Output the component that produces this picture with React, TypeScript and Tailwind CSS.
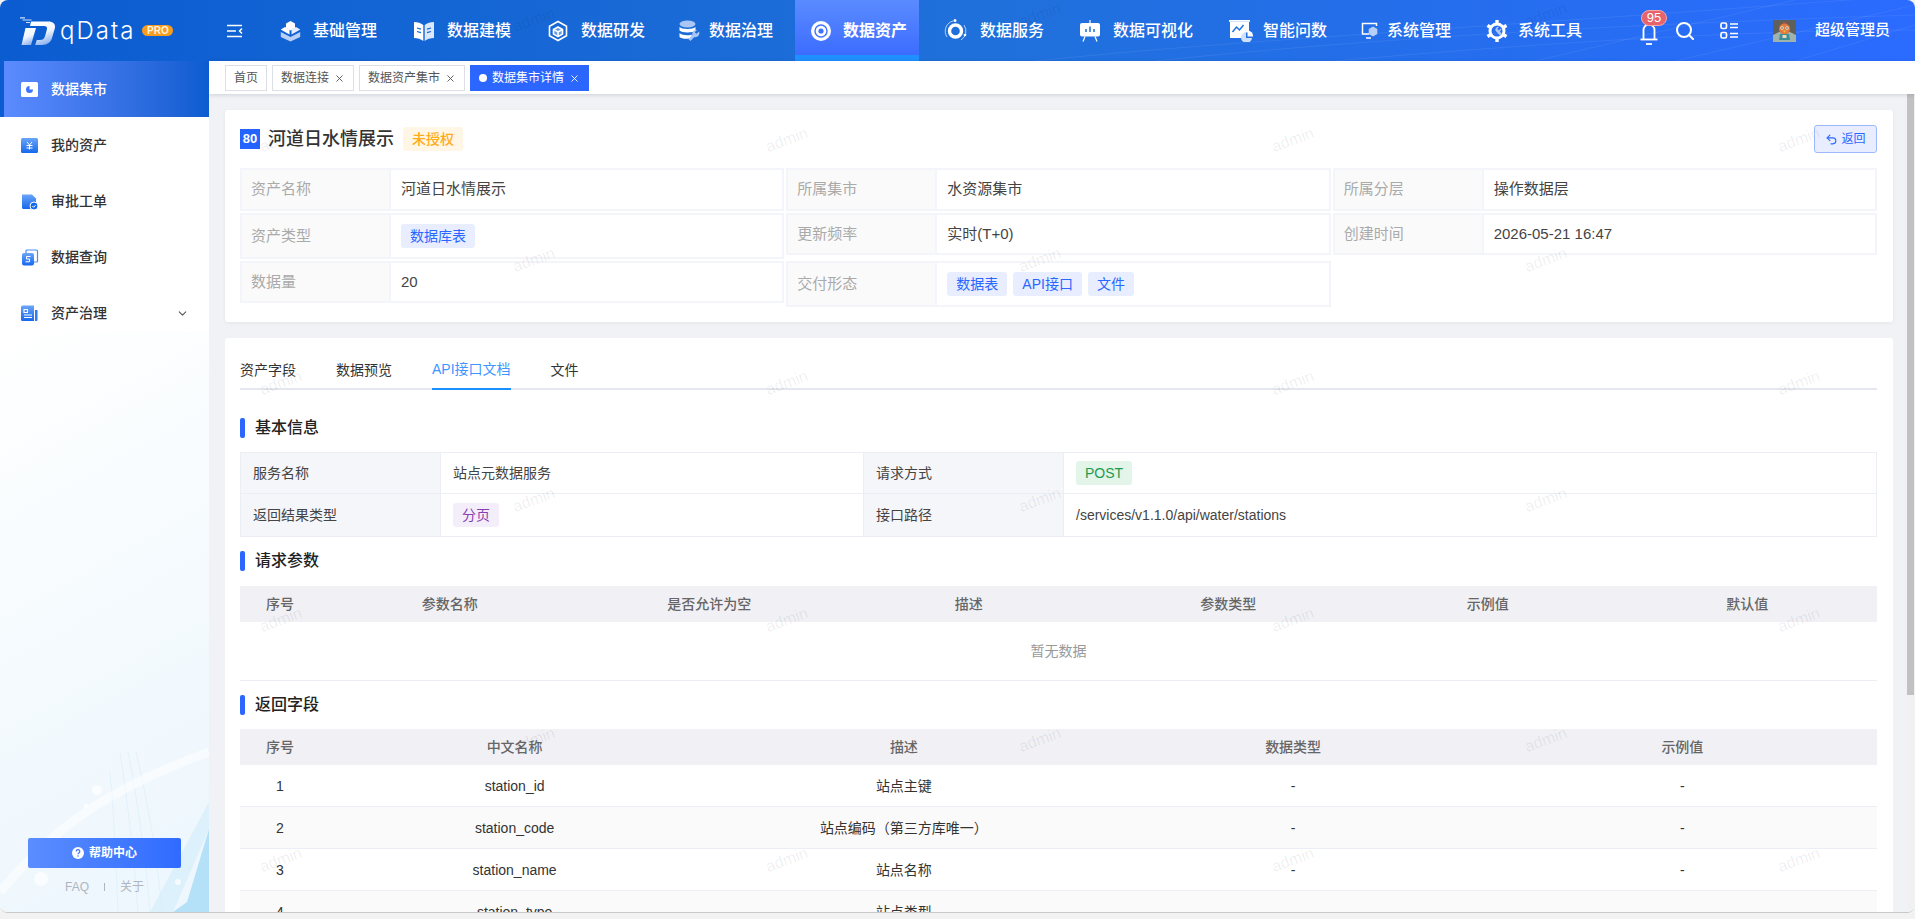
import { ChevronDown, Undo2, X } from "lucide-react";
import type { ReactNode } from "react";

const fontStack = "font-['Liberation_Sans','Noto_Sans_CJK_SC',sans-serif]";

function BasicIcon() {
  return (
    <svg width="21" height="22" viewBox="0 0 21 22">
      <path d="M10.5 1l4.5 2.5v4.5l-4.5 2.5L6 8V3.5z" fill="#fff" />
      <path d="M5 7l4.5 2.6v4.8L5 12 .8 9.6z" fill="#fff" />
      <path d="M16 7l4.2 2.6L16 12l-4.5 2.4V9.6z" fill="#e6efff" />
      <path d="M.8 12l9.7 5 9.7-5v5L10.5 21.5.8 17z" fill="#b9cff5" />
    </svg>
  );
}

function BookIcon() {
  return (
    <svg width="20" height="22" viewBox="0 0 20 22">
      <path d="M0 2c3.500 0 7 1 9.300 3v16C7 19 3.500 18 0 18z" fill="#fff" />
      <path d="M20 2c-3.500 0-7 1-9.300 3v16c2.300-2 5.800-3 9.300-3z" fill="#dbe7fb" />
      <path d="M3 8l4 1.200M3 11.500l4 1.200M17 8l-4 1.200M17 11.500l-4 1.200" stroke="#1565d6" strokeWidth="1.300" />
    </svg>
  );
}

function CubeIcon() {
  return (
    <svg width="20" height="22" viewBox="0 0 20 22" fill="none" stroke="#fff" strokeWidth="1.600">
      <path d="M10 1.500l8.500 4.700v9.600L10 20.500l-8.500-4.700V6.200z" />
      <path d="M10 7l4.500 2.500v4.600L10 16.600l-4.500-2.500V9.500z" fill="#fff" fillOpacity="0.35" />
      <path d="M5.500 9.500l4.500 2.400 4.500-2.400M10 12v4.600" />
    </svg>
  );
}

function DatabaseIcon() {
  return (
    <svg width="21" height="22" viewBox="0 0 21 22">
      <ellipse cx="8.500" cy="4" rx="8" ry="3.500" fill="#a9c6f5" />
      <path d="M.5 7c2 2.600 14 2.600 16 0v3.500c-2 2.600-14 2.600-16 0z" fill="#fff" />
      <path d="M.5 13c2 2.600 11 2.600 12 1.500l1 3C10 19.500 2.500 19 .5 17z" fill="#fff" />
      <path d="M20 11.500l-2.500 2.300-1.800-1.500 2.300-2.300a4 4 0 0 0-4.600 5l-4 4 2 2 4-4a4 4 0 0 0 4.600-5.500z" fill="#a9c6f5" />
    </svg>
  );
}

function AssetIcon() {
  return (
    <svg width="20" height="20" viewBox="0 0 20 20">
      <circle cx="10" cy="10" r="10" fill="#fff" />
      <circle cx="10" cy="10" r="6" fill="none" stroke="#3f72ff" strokeWidth="1.400" />
      <circle cx="10" cy="10" r="2.600" fill="#3f72ff" />
    </svg>
  );
}

function ServiceIcon() {
  return (
    <svg width="23" height="26" viewBox="0 0 23 26" fill="none">
      <circle cx="11.500" cy="13" r="6" stroke="#fff" strokeWidth="3.400" />
      <path d="M3 19A10.500 10.500 0 0 1 9 3M20 7a10.500 10.500 0 0 1-3 15" stroke="#fff" strokeOpacity="0.75" strokeWidth="0.900" />
      <circle cx="11" cy="2.500" r="1.500" fill="#fff" />
      <circle cx="21" cy="17" r="1.300" fill="#fff" />
    </svg>
  );
}

function ScreenIcon() {
  return (
    <svg width="20" height="22" viewBox="0 0 20 22">
      <rect x="0" y="3" width="20" height="13.500" rx="2" fill="#fff" />
      <path d="M6 12V9M10 12V6.500M14 12V9" stroke="#1e6fd9" strokeWidth="1.500" />
      <path d="M10 0v3M5 16.500L3 21.500M15 16.500l2 5" stroke="#fff" strokeWidth="1.200" />
    </svg>
  );
}

function ChartIcon() {
  return (
    <svg width="24" height="22" viewBox="0 0 24 22">
      <rect x="0" y="0" width="21" height="1.800" fill="#fff" />
      <path d="M1 2h19v10a8 8 0 0 0-7 6H1z" fill="#fff" />
      <path d="M3.500 12l4-5 3 3 4-5" stroke="#1e73dd" strokeWidth="1.500" fill="none" />
      <path d="M17 12a5.500 5.500 0 1 0 6 6h-6z" fill="#cfe0fa" />
      <path d="M18.500 10.500a5.500 5.500 0 0 1 5.500 6h-5.500z" fill="#fff" />
    </svg>
  );
}

function MonitorIcon() {
  return (
    <svg width="17" height="19" viewBox="0 0 17 19" fill="none">
      <path d="M8 13H1.500V2.500h14V5" stroke="#fff" strokeWidth="1.500" />
      <path d="M12 5.500l4.300 2.500v5l-4.300 2.500L7.700 13V8z" fill="#b7d0f7" />
      <path d="M5 17h5" stroke="#fff" strokeWidth="1.500" />
    </svg>
  );
}

function GearIcon() {
  return (
    <svg width="22" height="24" viewBox="0 0 22 24" fill="none">
      <circle cx="11" cy="12" r="7" stroke="#fff" strokeWidth="3" />
      <path d="M11 1v4M11 19v4M1.500 6.500l3.400 2M17 15.500l3.500 2M1.500 17.500l3.400-2M17 8.500l3.500-2" stroke="#fff" strokeWidth="3.400" />
      <path d="M15 9.500l-2.200 1.800-1.500-1.300 1.800-2.200a3 3 0 0 0-3.600 3.900l4.600 5 1.800-1.500-2-3a3 3 0 0 0 1.100-3.700z" fill="#a9c6f5" />
    </svg>
  );
}

function LogoMark() {
  return (
    <svg width="36" height="28" viewBox="0 0 36 28">
      <defs>
        <linearGradient id="logo-fill" x1="0.1" y1="0" x2="0.5" y2="1">
          <stop offset="0" stopColor="#ffffff" />
          <stop offset="0.55" stopColor="#f2f6ff" />
          <stop offset="1" stopColor="#8fb4ee" />
        </linearGradient>
      </defs>
      <path d="M5.500 11H16l-5 17H1.500z" fill="url(#logo-fill)" />
      <path d="M11 4.500h17c5 0 8 2.500 6.800 7l-2.600 9c-1.300 4.700-5 7.500-10 7.500h-7l1.600-5h3.200c2.500 0 4.200-1 4.900-3.500l2-7c.6-2.300-.3-3.500-2.800-3.500H10z" fill="url(#logo-fill)" />
      <path d="M0 .8h5M2.500 3h9M6 5.500h4" stroke="#cfe0ff" strokeWidth="1.200" />
    </svg>
  );
}

function CollapseIcon() {
  return (
    <svg width="16" height="14" viewBox="0 0 16 14" fill="none" stroke="#fff" strokeWidth="1.500">
      <path d="M0 1.500h15M0 7h9M0 12.500h15" />
      <path d="M15 4.500L12.500 7l2.500 2.500" />
    </svg>
  );
}

function BellIcon() {
  return (
    <svg width="18" height="20" viewBox="0 0 18 20" fill="none" stroke="#fff" strokeWidth="1.800">
      <path d="M3.500 14V5a5.500 5.500 0 0 1 11 0v9" />
      <path d="M.5 14.500h17" />
      <path d="M6 19h6" />
    </svg>
  );
}

function SearchIcon() {
  return (
    <svg width="18" height="18" viewBox="0 0 18 18" fill="none" stroke="#fff" strokeWidth="2">
      <circle cx="8" cy="8" r="7" />
      <path d="M13 13l4 4" strokeLinecap="round" />
    </svg>
  );
}

function GridIcon() {
  return (
    <svg width="18" height="17" viewBox="0 0 18 17" fill="none" stroke="#fff" strokeWidth="1.700">
      <rect x="1" y="1" width="5.500" height="5.500" rx="1.500" />
      <rect x="1" y="10.500" width="5.500" height="5.500" rx="1.500" />
      <path d="M10 2h8M10 5.500h8M10 11.500h8M10 15h8" />
    </svg>
  );
}

function Avatar() {
  return (
    <svg width="23" height="22" viewBox="0 0 23 22">
      <rect width="23" height="22" fill="#5f5f5c" />
      <path d="M0 15l6-3h11l6 3v7H0z" fill="#9fb2ad" />
      <path d="M10 1l1.500 2L13 1.500 13.500 4l-4 .5z" fill="#d8432c" />
      <ellipse cx="11.500" cy="9" rx="5.500" ry="5.500" fill="#e07a3e" />
      <circle cx="9" cy="8" r="1.700" fill="#f6ecd9" />
      <circle cx="14" cy="8" r="1.700" fill="#f6ecd9" />
      <circle cx="9" cy="8" r="0.700" fill="#222" />
      <circle cx="14" cy="8" r="0.700" fill="#222" />
      <path d="M10 10.500h3l-1.500 2.200z" fill="#f5c23f" />
      <path d="M7 14h9l1 6H6z" fill="#3f8f99" />
      <path d="M9.500 15h4v3h-4z" fill="#e9d9b8" />
    </svg>
  );
}

function SideIcon({ kind, active }: { kind: string; active?: boolean }) {
  const fill = active ? "#ffffff" : "url(#side-fill)";
  const ink = active ? "#3f72ff" : "#ffffff";
  return (
    <svg width="18" height="17" viewBox="0 0 18 17">
      <defs>
        <linearGradient id="side-fill" x1="0" y1="0" x2="0" y2="1">
          <stop offset="0" stopColor="#6aa5f8" />
          <stop offset="1" stopColor="#1668ec" />
        </linearGradient>
      </defs>
      {kind === "market" && (
        <>
          <rect x="0" y="1" width="17" height="15" rx="1.500" fill={fill} />
          <path d="M8.500 5a3.500 3.500 0 1 0 3.500 3.500H8.500z" fill={ink} />
        </>
      )}
      {kind === "mine" && (
        <>
          <rect x="0" y="1" width="17" height="15" rx="1.500" fill={fill} />
          <path d="M6 5l2.500 3L11 5M5.500 8.500h6M5.500 11h6M8.500 8v4.500" stroke={ink} strokeWidth="1" fill="none" />
        </>
      )}
      {kind === "approve" && (
        <>
          <path d="M1 1.500h10l4 4V16H2.500A1.500 1.500 0 0 1 1 14.500z" fill={fill} />
          <circle cx="13" cy="13" r="4" fill="#1668ec" stroke="#fff" />
          <path d="M11.300 13l1.300 1.300 2-2.200" stroke="#fff" fill="none" />
        </>
      )}
      {kind === "query" && (
        <>
          <rect x="5" y="1" width="11.500" height="12" rx="1" fill="none" stroke="#4b8df5" strokeWidth="1.200" />
          <rect x="1" y="4" width="12" height="12.500" rx="2" fill={fill} />
          <path d="M9.500 7.500h-4v2.500h3v2.800h-4" stroke={ink} strokeWidth="1" fill="none" />
        </>
      )}
      {kind === "govern" && (
        <>
          <path d="M0 2a1.500 1.500 0 0 1 1.500-1.500H13V16H1.500A1.500 1.500 0 0 1 0 14.500z" fill={fill} />
          <path d="M14 5h2.500v10a1 1 0 0 1-1 1H14z" fill="#2f7bf0" />
          <path d="M3 4.500h3.500v3H3zM3 10h8M3 12.500h8" stroke={ink} strokeWidth="1.100" fill="none" />
        </>
      )}
    </svg>
  );
}

function Tag({ children, className }: { children: ReactNode; className: string }) {
  return <span className={`inline-flex h-6 items-center rounded-[3px] px-[9px] text-sm ${className}`}>{children}</span>;
}

const nav = [
  { label: "基础管理", icon: <BasicIcon />, width: "w-[134px]", box: "w-[33px]" },
  { label: "数据建模", icon: <BookIcon />, width: "w-[134px]", box: "w-[33px]" },
  { label: "数据研发", icon: <CubeIcon />, width: "w-[131px]", box: "w-[33px]" },
  { label: "数据治理", icon: <DatabaseIcon />, width: "w-[134px]", box: "w-[30px]" },
];

const navRest = [
  { label: "数据服务", icon: <ServiceIcon />, width: "w-[143px]", pad: "pl-[25px]", box: "w-[36px]" },
  { label: "数据可视化", icon: <ScreenIcon />, width: "w-[149px]", pad: "pl-[18px]", box: "w-[33px]" },
  { label: "智能问数", icon: <ChartIcon />, width: "w-[132px]", pad: "pl-[18px]", box: "w-[34px]" },
  { label: "系统管理", icon: <MonitorIcon />, width: "w-[125px]", pad: "pl-[18px]", box: "w-[26px]" },
  { label: "系统工具", icon: <GearIcon />, width: "w-[132px]", pad: "pl-[18px]", box: "w-[32px]" },
];

const sideItems = [
  { label: "我的资产", kind: "mine" },
  { label: "审批工单", kind: "approve" },
  { label: "数据查询", kind: "query" },
];

const watermarks = [
  [534, 20], [1040, 15], [1546, 15],
  [281, 140], [787, 140], [1293, 140], [1799, 140],
  [534, 260], [1040, 260], [1546, 260],
  [281, 383], [787, 383], [1293, 383], [1799, 383],
  [534, 500], [1040, 500], [1546, 500],
  [281, 620], [787, 620], [1293, 620], [1799, 620],
  [534, 740], [1040, 740], [1546, 740],
  [281, 860], [787, 860], [1293, 860], [1799, 860],
];

const infoRows = [
  [
    { label: "资产名称", value: "河道日水情展示" },
    { label: "所属集市", value: "水资源集市" },
    { label: "所属分层", value: "操作数据层" },
  ],
  [
    { label: "资产类型", tags: ["数据库表"] },
    { label: "更新频率", value: "实时(T+0)" },
    { label: "创建时间", value: "2026-05-21 16:47" },
  ],
  [
    { label: "数据量", value: "20" },
    { label: "交付形态", tags: ["数据表", "API接口", "文件"] },
  ],
];

const fields = [
  ["1", "station_id", "站点主键"],
  ["2", "station_code", "站点编码（第三方库唯一）"],
  ["3", "station_name", "站点名称"],
  ["4", "station_type", "站点类型"],
];

function SectionTitle({ children }: { children: ReactNode }) {
  return (
    <div className="flex h-5 items-center gap-[10px]">
      <span className="h-5 w-[5px] rounded-[2px] bg-[#2b66ff]" />
      <span className="text-base font-medium text-[#222]">{children}</span>
    </div>
  );
}

function InfoCell({ cell, rowIndex }: { cell: { label: string; value?: string; tags?: string[] }; rowIndex: number }) {
  const height = cell.tags ? "h-[46px]" : rowIndex === 0 ? "h-[43px]" : "h-[42px]";
  return (
    <div className={`flex items-stretch border-2 border-[#f3f5fb] text-[15px] ${height}`}>
      <div className="flex w-[149px] shrink-0 items-center border-r-2 border-[#f3f5fb] bg-[#fafafa] pl-[9px] text-[#aaa]">{cell.label}</div>
      <div className="flex flex-1 items-center gap-[6px] pl-[10px] text-[#444]">
        {cell.value}
        {cell.tags?.map((tag) => (
          <Tag key={tag} className="bg-[#e8eeff] text-[#2b66ff]">
            {tag}
          </Tag>
        ))}
      </div>
    </div>
  );
}

export default function App() {
  return (
    <div className={`relative h-[919px] w-[1915px] overflow-hidden bg-[#f2f2f2] ${fontStack}`}>
      <div className="flex h-[913px] flex-col overflow-hidden rounded-lg border-b border-[#c8c8c8]">
        {/* top bar */}
        <header className="relative flex h-[61px] shrink-0 items-stretch bg-gradient-to-r from-[#0a5cd0] via-[#1f70da] to-[#2b6bff] text-white">
          <svg className="absolute right-0 top-0" width="880" height="61" viewBox="0 0 880 61" fill="none" stroke="#fff" strokeOpacity="0.07">
            <path d="M0 61C200 40 420 30 880 -5M120 61C320 40 560 25 880 15M300 61C480 45 700 30 880 30M500 61L760 0M640 61L880 5M760 61L880 25" />
          </svg>
          <div className="relative flex w-[227px] shrink-0 items-center pl-[20px]">
            <LogoMark />
            <span className="ml-[4px] font-['Inter',sans-serif] text-2xl font-light tracking-[2px]">qData</span>
            <span className="ml-[7px] flex h-[11px] w-[31px] items-center justify-center rounded-full bg-[#f79c1e] text-[10px] font-bold leading-none text-[#fff3dc]">PRO</span>
          </div>
          <div className="relative flex w-[35px] shrink-0 items-center">
            <CollapseIcon />
          </div>
          <nav className="relative flex items-stretch text-base font-medium">
            {nav.map((item) => (
              <div key={item.label} className={`flex items-center pl-[18px] ${item.width}`}>
                <span className={`flex shrink-0 items-center ${item.box}`}>{item.icon}</span>
                {item.label}
              </div>
            ))}
            <div className="flex w-[124px] items-center border-b-[6px] border-[#1e90ff] bg-gradient-to-b from-[#5b8bff] to-[#3c6cff] pl-[16px] pt-[6px] font-bold">
              <span className="flex w-[32px] shrink-0 items-center">
                <AssetIcon />
              </span>
              数据资产
            </div>
            {navRest.map((item) => (
              <div key={item.label} className={`flex items-center ${item.pad} ${item.width}`}>
                <span className={`flex shrink-0 items-center ${item.box}`}>{item.icon}</span>
                {item.label}
              </div>
            ))}
          </nav>
          <div className="relative ml-[40px] flex items-center">
            <div className="relative flex w-[36px] items-center pt-[8px]">
              <BellIcon />
              <span className="absolute left-[1px] top-[-7px] flex h-[16px] w-[26px] items-center justify-center rounded-full border border-[#f5a7ab] bg-[#e5636c] text-[13px] font-medium leading-none">95</span>
            </div>
            <SearchIcon />
            <span className="ml-[26px] flex">
              <GridIcon />
            </span>
            <span className="ml-[35px] flex">
              <Avatar />
            </span>
            <span className="ml-[19px] text-[15px] font-medium">超级管理员</span>
          </div>
        </header>

        <div className="flex min-h-0 flex-1">
          {/* side menu */}
          <aside className="relative z-20 flex w-[209px] shrink-0 flex-col overflow-hidden bg-white text-sm">
            <svg className="absolute bottom-0 left-0" width="209" height="580" viewBox="0 0 209 580">
              <defs>
                <linearGradient id="side-bg" x1="0" y1="0" x2="0.2" y2="1">
                  <stop offset="0" stopColor="#ffffff" />
                  <stop offset="0.5" stopColor="#f6fbfe" />
                  <stop offset="1" stopColor="#eef7fd" />
                </linearGradient>
              </defs>
              <rect width="209" height="580" fill="url(#side-bg)" />
              <path d="M209 470L150 580h23l36-83z" fill="#dcf1fb" />
              <path d="M209 497L187 570l-14 10h36z" fill="#b4e1f8" />
              <path d="M120 420c8 50 14 110 18 160M128 420c10 50 18 110 22 160M136 420c12 50 22 110 26 160M110 440c4 40 6 90 8 140" stroke="#d8edf9" strokeWidth="0.600" fill="none" />
              <path d="M0 560C50 500 100 460 209 420" stroke="#ffffff" strokeWidth="9" fill="none" opacity="0.5" />
              <circle cx="97" cy="458" r="5" fill="#ffffff" opacity="0.7" />
              <circle cx="86" cy="474" r="2.500" fill="#ffffff" opacity="0.7" />
              <circle cx="41" cy="547" r="7" fill="#ffffff" opacity="0.7" />
              <circle cx="178" cy="550" r="3" fill="#ffffff" opacity="0.7" />
            </svg>
            <div className="relative flex h-14 items-center border-l-4 border-[#0a5cd0] bg-gradient-to-r from-[#5b8bff] to-[#0a5cd0] pl-[17px] font-medium text-white">
              <span className="flex w-[30px] shrink-0">
                <SideIcon kind="market" active />
              </span>
              数据集市
            </div>
            {sideItems.map((item) => (
              <div key={item.label} className="relative flex h-14 items-center pl-[21px] font-medium text-[#333]">
                <span className="flex w-[30px] shrink-0">
                  <SideIcon kind={item.kind} />
                </span>
                {item.label}
              </div>
            ))}
            <div className="relative flex h-14 items-center pl-[21px] pr-[20px] font-medium text-[#333]">
              <span className="flex w-[30px] shrink-0">
                <SideIcon kind="govern" />
              </span>
              资产治理
              <ChevronDown size={13} className="ml-auto text-[#555]" />
            </div>
            <div className="relative mt-auto flex flex-col items-center pb-[19px]">
              <button className="flex h-[30px] w-[153px] items-center justify-center gap-[5px] rounded-[2px] bg-gradient-to-r from-[#5b8dff] to-[#2f6bff] text-xs font-bold text-white">
                <svg width="12" height="12" viewBox="0 0 12 12">
                  <circle cx="6" cy="6" r="6" fill="#fff" />
                  <path d="M4.200 4.500a1.800 1.800 0 1 1 2.700 1.500c-.6.400-.9.700-.9 1.300" stroke="#3f72ff" strokeWidth="1.200" fill="none" />
                  <circle cx="6" cy="9" r="0.800" fill="#3f72ff" />
                </svg>
                帮助中心
              </button>
              <div className="mt-[13px] flex h-[12px] items-center text-xs text-[#b0b5bd]">
                <span>FAQ</span>
                <span className="mx-[15px] h-[8px] w-px bg-[#b0b5bd]" />
                <span>关于</span>
              </div>
            </div>
          </aside>

          <main className="flex min-w-0 flex-1 flex-col">
            {/* open tabs */}
            <div className="z-[1] flex h-[33px] shrink-0 items-start gap-[5px] bg-white pl-[16px] pt-[4px] text-xs text-[#555] shadow-[0_1px_4px_rgba(0,21,41,0.15)]">
              <span className="flex h-[26px] w-[42px] items-center justify-center border border-[#dcdfe6]">首页</span>
              <span className="flex h-[26px] w-[82px] items-center justify-center gap-[5px] border border-[#dcdfe6]">
                数据连接 <X size={11} />
              </span>
              <span className="flex h-[26px] w-[106px] items-center justify-center gap-[5px] border border-[#dcdfe6]">
                数据资产集市 <X size={11} />
              </span>
              <span className="flex h-[26px] w-[119px] items-center justify-center gap-[5px] bg-[#2b66ff] text-white">
                <span className="h-[8px] w-[8px] rounded-full bg-white" />
                数据集市详情 <X size={11} />
              </span>
            </div>

            <div className="flex min-h-0 flex-1 bg-[#f0f2f5]">
              <div className="min-w-0 flex-1 overflow-hidden pl-[16px] pr-[14px] pt-[16px]">
                {/* asset summary */}
                <section className="rounded-[3px] bg-white pb-[15px] pl-[15px] pr-[16px] pt-[15px] shadow-[0_1px_4px_rgba(0,21,41,0.06)]">
                  <div className="mb-[15px] flex h-[28px] items-center">
                    <span className="flex h-5 w-5 items-center justify-center bg-[#2563ff] text-[13px] font-bold text-white">80</span>
                    <span className="ml-[8px] text-lg font-medium text-[#333]">河道日水情展示</span>
                    <span className="ml-[9px] flex h-6 w-[60px] items-center justify-center rounded-[3px] bg-[#fff6e5] text-sm font-medium text-[#ffab1a]">未授权</span>
                    <button className="ml-auto flex h-[28px] w-[63px] items-center justify-center gap-[3px] rounded-[3px] border border-[#9db8ff] bg-[#e8eeff] text-xs text-[#2b66ff]">
                      <Undo2 size={13} />
                      返回
                    </button>
                  </div>
                  <div className="grid grid-cols-3 items-start gap-x-[2px] gap-y-[2px]">
                    {infoRows.map((row, rowIndex) => row.map((cell) => <InfoCell key={cell.label} cell={cell} rowIndex={rowIndex} />))}
                  </div>
                </section>

                {/* api doc */}
                <section className="mt-[16px] rounded-[3px] bg-white pl-[15px] pr-[16px] pt-[12px] text-sm">
                  <div className="flex h-10 gap-[40px] border-b-2 border-[#e4e7ed]">
                    <span className="flex h-10 items-center text-[#333]">资产字段</span>
                    <span className="flex h-10 items-center text-[#333]">数据预览</span>
                    <span className="flex h-10 items-center border-b-2 border-[#1890ff] text-[#4096ff]">API接口文档</span>
                    <span className="flex h-10 items-center text-[#333]">文件</span>
                  </div>

                  <div className="mt-[28px]">
                    <SectionTitle>基本信息</SectionTitle>
                  </div>
                  <div className="mt-[14px] grid grid-cols-[200px_423px_200px_1fr] border border-[#ebeef5] text-[#444]">
                    <div className="flex h-[41px] items-center border-b border-r border-[#ebeef5] bg-[#f5f6fa] pl-[12px]">服务名称</div>
                    <div className="flex h-[41px] items-center border-b border-r border-[#ebeef5] pl-[12px]">站点元数据服务</div>
                    <div className="flex h-[41px] items-center border-b border-r border-[#ebeef5] bg-[#f5f6fa] pl-[12px]">请求方式</div>
                    <div className="flex h-[41px] items-center border-b border-[#ebeef5] pl-[12px]">
                      <Tag className="bg-[#e3f5e9] text-[#1d9b52]">POST</Tag>
                    </div>
                    <div className="flex h-[42px] items-center border-r border-[#ebeef5] bg-[#f5f6fa] pl-[12px]">返回结果类型</div>
                    <div className="flex h-[42px] items-center border-r border-[#ebeef5] pl-[12px]">
                      <Tag className="bg-[#f3eefa] text-[#8a3fb0]">分页</Tag>
                    </div>
                    <div className="flex h-[42px] items-center border-r border-[#ebeef5] bg-[#f5f6fa] pl-[12px]">接口路径</div>
                    <div className="flex h-[42px] items-center pl-[12px]">/services/v1.1.0/api/water/stations</div>
                  </div>

                  <div className="mt-[14px]">
                    <SectionTitle>请求参数</SectionTitle>
                  </div>
                  <div className="mt-[15px] grid h-9 grid-cols-[80px_repeat(6,1fr)] items-center bg-[#f0f0f5] text-center font-medium text-[#666]">
                    {["序号", "参数名称", "是否允许为空", "描述", "参数类型", "示例值", "默认值"].map((title) => (
                      <span key={title}>{title}</span>
                    ))}
                  </div>
                  <div className="flex h-[59px] items-center justify-center border-b border-[#ebeef5] text-[#999]">暂无数据</div>

                  <div className="mt-[14px]">
                    <SectionTitle>返回字段</SectionTitle>
                  </div>
                  <div className="mt-[14px] grid h-9 grid-cols-[80px_repeat(4,1fr)] items-center bg-[#f0f0f5] text-center font-medium text-[#666]">
                    {["序号", "中文名称", "描述", "数据类型", "示例值"].map((title) => (
                      <span key={title}>{title}</span>
                    ))}
                  </div>
                  {fields.map((row, index) => (
                    <div key={row[0]} className={`grid h-[42px] grid-cols-[80px_repeat(4,1fr)] items-center border-b border-[#ebeef5] text-center text-[#333] ${index % 2 === 1 ? "bg-[#fafafa]" : "bg-white"}`}>
                      <span>{row[0]}</span>
                      <span>{row[1]}</span>
                      <span>{row[2]}</span>
                      <span>-</span>
                      <span>-</span>
                    </div>
                  ))}
                </section>
              </div>

              {/* scrollbar */}
              <div className="w-2 shrink-0 bg-[#f1f1f1]">
                <div className="h-[601px] w-[7px] bg-[#c1c1c1]" />
              </div>
            </div>
          </main>
        </div>
      </div>

      {/* watermark layer */}
      <div className="pointer-events-none absolute inset-0 z-10">
        {watermarks.map(([x, y]) => (
          <span key={`${x}-${y}`} className="absolute -translate-x-1/2 -translate-y-1/2 -rotate-[20deg] text-base text-black/[0.07]" style={{ left: x, top: y }}>
            admin
          </span>
        ))}
      </div>
    </div>
  );
}
